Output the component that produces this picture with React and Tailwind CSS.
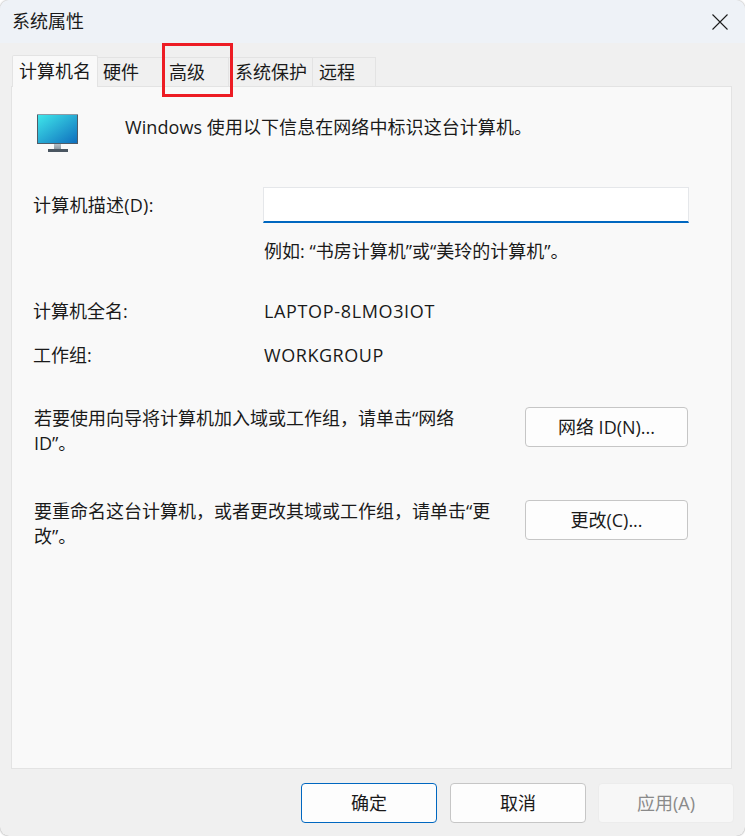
const FONT = 'font-["Open_Sans","Noto_Sans_CJK_SC",sans-serif]';

function MonitorIcon() {
  return (
    <svg width="42" height="38" viewBox="0 0 42 38" className="block">
      <defs>
        <linearGradient id="screen" x1="0" y1="0" x2="1" y2="1">
          <stop offset="0" stopColor="#3fe6ea" />
          <stop offset="1" stopColor="#0f6fbe" />
        </linearGradient>
        <linearGradient id="stand" x1="0" y1="0" x2="0" y2="1">
          <stop offset="0" stopColor="#b7c1c8" />
          <stop offset="1" stopColor="#8d99a3" />
        </linearGradient>
      </defs>
      <rect x="0" y="0" width="41" height="30" fill="#4f5c68" />
      <rect x="0" y="0" width="41" height="1" fill="#8e9ba6" />
      <rect x="1" y="1" width="39" height="28" fill="url(#screen)" />
      <rect x="17" y="30" width="7" height="5" fill="url(#stand)" />
      <rect x="11" y="35" width="20" height="3" fill="#4a5661" />
    </svg>
  );
}

function Tab({ label, active, className }) {
  if (active) {
    return (
      <div className={`relative z-10 -mb-px flex h-[32px] items-center rounded-t-[2px] border border-b-0 border-[#e3e3e3] bg-[#f9f9f9] pb-[1px] pl-[6px] ${className}`}>
        {label}
      </div>
    );
  }
  return (
    <div className={`mt-[2px] flex h-[29px] items-center border-t border-r border-[#e3e3e3] bg-[#f0f0f0] ${className}`}>
      {label}
    </div>
  );
}

function DialogButton({ children, className = '' }) {
  return (
    <button
      type="button"
      className={`flex h-[40px] items-center justify-center rounded-[4px] border ${className}`}
    >
      {children}
    </button>
  );
}

const NORMAL_BUTTON = 'border-[#c6c6c6] bg-[#fdfdfd]';

export default function App() {
  return (
    <div className={`relative h-[836px] w-[745px] overflow-hidden bg-white text-[18px] leading-[25px] text-[#1a1a1a] ${FONT}`}>
      <div className="flex h-full flex-col overflow-hidden rounded-[9px] bg-[#f0f0f0] shadow-[0_0_2px_#8a8a8a]">
        <div className="flex h-[43px] shrink-0 items-center justify-between bg-[#eef2f7] pl-[12px] pr-[17px]">
          <span className="-mt-[1px]">系统属性</span>
          <svg width="16" height="16" viewBox="0 0 16 16" fill="none" stroke="#1c1c1c" strokeWidth="1.1">
            <path d="M0.5 0.5 15.5 15.5 M15.5 0.5 0.5 15.5" />
          </svg>
        </div>

        <div className="mt-[12px] flex pl-[12px]">
          <Tab label="计算机名" active className="w-[86px]" />
          <Tab label="硬件" className="w-[65px] pl-[5px]" />
          <Tab label="高级" className="w-[66px] pl-[6px]" />
          <Tab label="系统保护" className="w-[84px] pl-[6px]" />
          <Tab label="远程" className="w-[63px] pl-[6px]" />
        </div>

        <div className="ml-[11px] mr-[13px] flex h-[683px] shrink-0 flex-col border border-[#e3e3e3] bg-[#f9f9f9] pl-[22px] pt-[27px]">
          <div className="flex h-[38px] items-start pl-[3px]">
            <MonitorIcon />
            <span className="ml-[46px] mt-[1px] tracking-[0.07px]">Windows 使用以下信息在网络中标识这台计算机。</span>
          </div>

          <div className="mt-[35px] flex h-[36px] items-center">
            <span className="-ml-px w-[230px] shrink-0 tracking-[0.25px]">计算机描述(D):</span>
            <div className="h-[36px] w-[426px] border border-b-2 border-[#e5e7ea] border-b-[#0067c0] bg-white" />
          </div>

          <div className="mt-[16px] pl-[230px]">例如: “书房计算机”或“美玲的计算机”。</div>

          <div className="mt-[35px] flex">
            <span className="-ml-px w-[231px] shrink-0">计算机全名:</span>
            <span className="tracking-[0.65px]">LAPTOP-8LMO3IOT</span>
          </div>

          <div className="mt-[19px] flex">
            <span className="-ml-px w-[231px] shrink-0">工作组:</span>
            <span className="tracking-[0.55px]">WORKGROUP</span>
          </div>

          <div className="mt-[38px] flex items-start">
            <p className="w-[465px] shrink-0">若要使用向导将计算机加入域或工作组，请单击“网络 ID”。</p>
            <DialogButton className={`ml-[26px] mt-[1px] w-[163px] ${NORMAL_BUTTON}`}>网络 ID(N)...</DialogButton>
          </div>

          <div className="mt-[43px] flex items-start">
            <p className="w-[465px] shrink-0">要重命名这台计算机，或者更改其域或工作组，请单击“更改”。</p>
            <DialogButton className={`ml-[26px] mt-[1px] w-[163px] ${NORMAL_BUTTON}`}>更改(C)...</DialogButton>
          </div>
        </div>

        <div className="flex justify-end pr-[11px] pt-[14px]">
          <DialogButton className="w-[136px] border-[#0067c0] bg-[#fdfdfd]">确定</DialogButton>
          <DialogButton className={`ml-[13px] w-[136px] ${NORMAL_BUTTON}`}>取消</DialogButton>
          <DialogButton className="ml-[12px] w-[136px] border-[#ececec] bg-[#f7f7f7] text-[#8a8a8a]">应用(A)</DialogButton>
        </div>
      </div>

      {/* annotation drawn over the screenshot */}
      <div className="absolute left-[162px] top-[43px] h-[54px] w-[71px] border-[3px] border-[#ed1c24]" />
    </div>
  );
}
